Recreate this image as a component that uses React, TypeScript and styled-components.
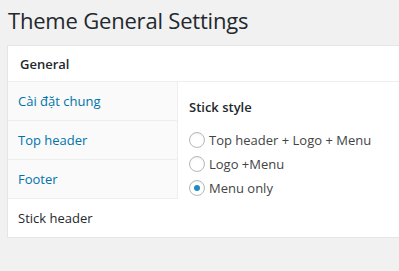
import React from 'react';
import styled, { createGlobalStyle } from 'styled-components';

const GlobalStyle = createGlobalStyle`
  body {
    margin: 0;
    background: #f1f1f1;
    font-family: "Open Sans", "Noto Sans", sans-serif;
    overflow: hidden;
  }
`;

const Page = styled.div`
  padding: 5px 0 0 7px;
  width: 430px;
`;

const Title = styled.h1`
  margin: 0 0 10px 1px;
  font-size: 22px;
  font-weight: 400;
  line-height: 30px;
  color: #23282d;
  letter-spacing: -0.2px;
`;

const Card = styled.div`
  background: #fff;
  border: 1px solid #e5e5e5;
  box-shadow: 0 1px 1px rgba(0, 0, 0, 0.04);
`;

const CardHeader = styled.div`
  height: 35px;
  display: flex;
  align-items: center;
  padding: 0 12px;
  font-size: 13px;
  font-weight: 600;
  color: #23282d;
  border-bottom: 1px solid #eee;
`;

const Body = styled.div`
  display: grid;
  grid-template-columns: 170px 1fr;
`;

const Tabs = styled.ul`
  margin: 0;
  padding: 0;
  list-style: none;
  background: #fafafa;
`;

const Tab = styled.li<{ $active?: boolean }>`
  height: 38px;
  display: flex;
  align-items: center;
  padding-left: 10px;
  font-size: 13px;
  border-bottom: 1px solid #eee;
  border-right: 1px solid ${p => (p.$active ? '#fff' : '#eee')};
  background: ${p => (p.$active ? '#fff' : 'transparent')};
  color: ${p => (p.$active ? '#23282d' : '#0073aa')};
  &:last-child {
    border-bottom: none;
  }
`;

const Panel = styled.div`
  padding: 16px 11px 12px;
`;

const FieldLabel = styled.div`
  font-size: 13px;
  font-weight: 600;
  color: #23282d;
  margin-bottom: 15px;
`;

const Options = styled.div`
  display: flex;
  flex-direction: column;
  gap: 6px;
`;

const Option = styled.label`
  display: flex;
  align-items: center;
  gap: 4px;
  font-size: 13px;
  color: #444;
  line-height: 18px;
`;

const Radio = styled.span<{ $checked?: boolean }>`
  width: 16px;
  height: 16px;
  box-sizing: border-box;
  border-radius: 50%;
  border: 1px solid #b4b9be;
  background: #fff;
  box-shadow: inset 0 1px 2px rgba(0, 0, 0, 0.07);
  display: flex;
  align-items: center;
  justify-content: center;
  &::after {
    content: '';
    display: ${p => (p.$checked ? 'block' : 'none')};
    width: 6px;
    height: 6px;
    border-radius: 50%;
    background: #1e8cbe;
  }
`;

const TABS = ['Cài đặt chung', 'Top header', 'Footer', 'Stick header'];
const OPTIONS = ['Top header + Logo + Menu', 'Logo +Menu', 'Menu only'];

const App: React.FC = () => (
  <Page>
    <GlobalStyle />
    <Title>Theme General Settings</Title>
    <Card>
      <CardHeader>General</CardHeader>
      <Body>
        <Tabs>
          {TABS.map((t, i) => (
            <Tab key={t} $active={i === 3}>
              {t}
            </Tab>
          ))}
        </Tabs>
        <Panel>
          <FieldLabel>Stick style</FieldLabel>
          <Options>
            {OPTIONS.map((o, i) => (
              <Option key={o}>
                <Radio $checked={i === 2} />
                {o}
              </Option>
            ))}
          </Options>
        </Panel>
      </Body>
    </Card>
  </Page>
);

export default App;
